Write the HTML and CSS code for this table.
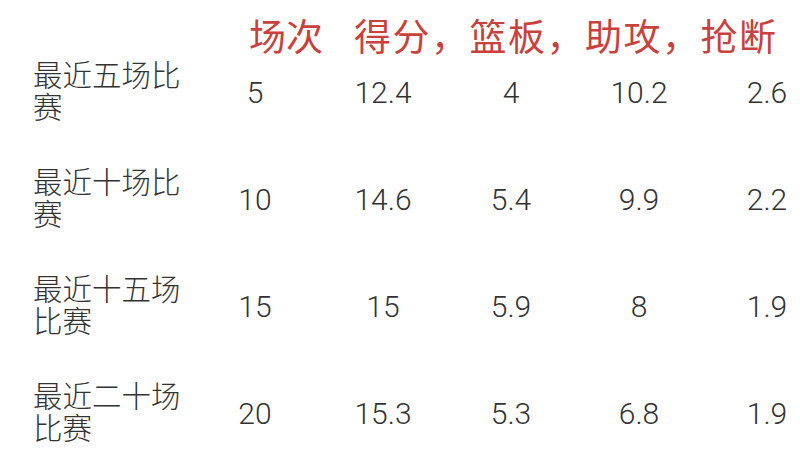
FILE: index.html
```html
<!DOCTYPE html>
<html lang="zh-CN">
<head>
<meta charset="utf-8">
<title>最近比赛数据</title>
<link rel="stylesheet" href="styles.css">
</head>
<body>
<div class="sheet">
  <div class="head">
    <span class="h-first">场次</span>
    <span class="h-rest">得分，篮板，助攻，抢断</span>
  </div>
  <div class="rows">
    <div class="row">
      <div class="label">最近五场比赛</div>
      <div class="num">5</div>
      <div class="num">12.4</div>
      <div class="num">4</div>
      <div class="num">10.2</div>
      <div class="num">2.6</div>
    </div>
    <div class="row">
      <div class="label">最近十场比赛</div>
      <div class="num">10</div>
      <div class="num">14.6</div>
      <div class="num">5.4</div>
      <div class="num">9.9</div>
      <div class="num">2.2</div>
    </div>
    <div class="row">
      <div class="label">最近十五场比赛</div>
      <div class="num">15</div>
      <div class="num">15</div>
      <div class="num">5.9</div>
      <div class="num">8</div>
      <div class="num">1.9</div>
    </div>
    <div class="row">
      <div class="label">最近二十场比赛</div>
      <div class="num">20</div>
      <div class="num">15.3</div>
      <div class="num">5.3</div>
      <div class="num">6.8</div>
      <div class="num">1.9</div>
    </div>
  </div>
</div>
</body>
</html>
```

FILE: styles.css
```css
html, body {
  margin: 0;
  padding: 0;
  background: #ffffff;
  overflow: hidden;
}

.sheet {
  width: 831px;
  font-family: Roboto, "Noto Sans CJK SC", sans-serif;
  color: #333333;
}

.head {
  display: flex;
  padding: 15px 0 0 249px;
  height: 40px;
  font-family: "Noto Sans CJK SC", sans-serif;
  font-size: 37px;
  line-height: 40px;
  color: #c8413d;
  white-space: nowrap;
}

.h-rest {
  margin-left: 31px;
  letter-spacing: 1.5px;
}

.rows {
  display: flex;
  flex-direction: column;
  gap: 32px;
}

.row {
  display: grid;
  grid-template-columns: 191px repeat(5, 128px);
  align-items: center;
  height: 75px;
}

.label {
  padding: 0 0 8px 33px;
  font-family: "Noto Sans CJK SC", sans-serif;
  font-size: 29.5px;
  font-weight: 300;
  line-height: 32px;
  color: #333333;
}

.num {
  text-align: center;
  font-family: Roboto, sans-serif;
  font-size: 30px;
  font-weight: 300;
  line-height: 40px;
  color: #333333;
}
```
